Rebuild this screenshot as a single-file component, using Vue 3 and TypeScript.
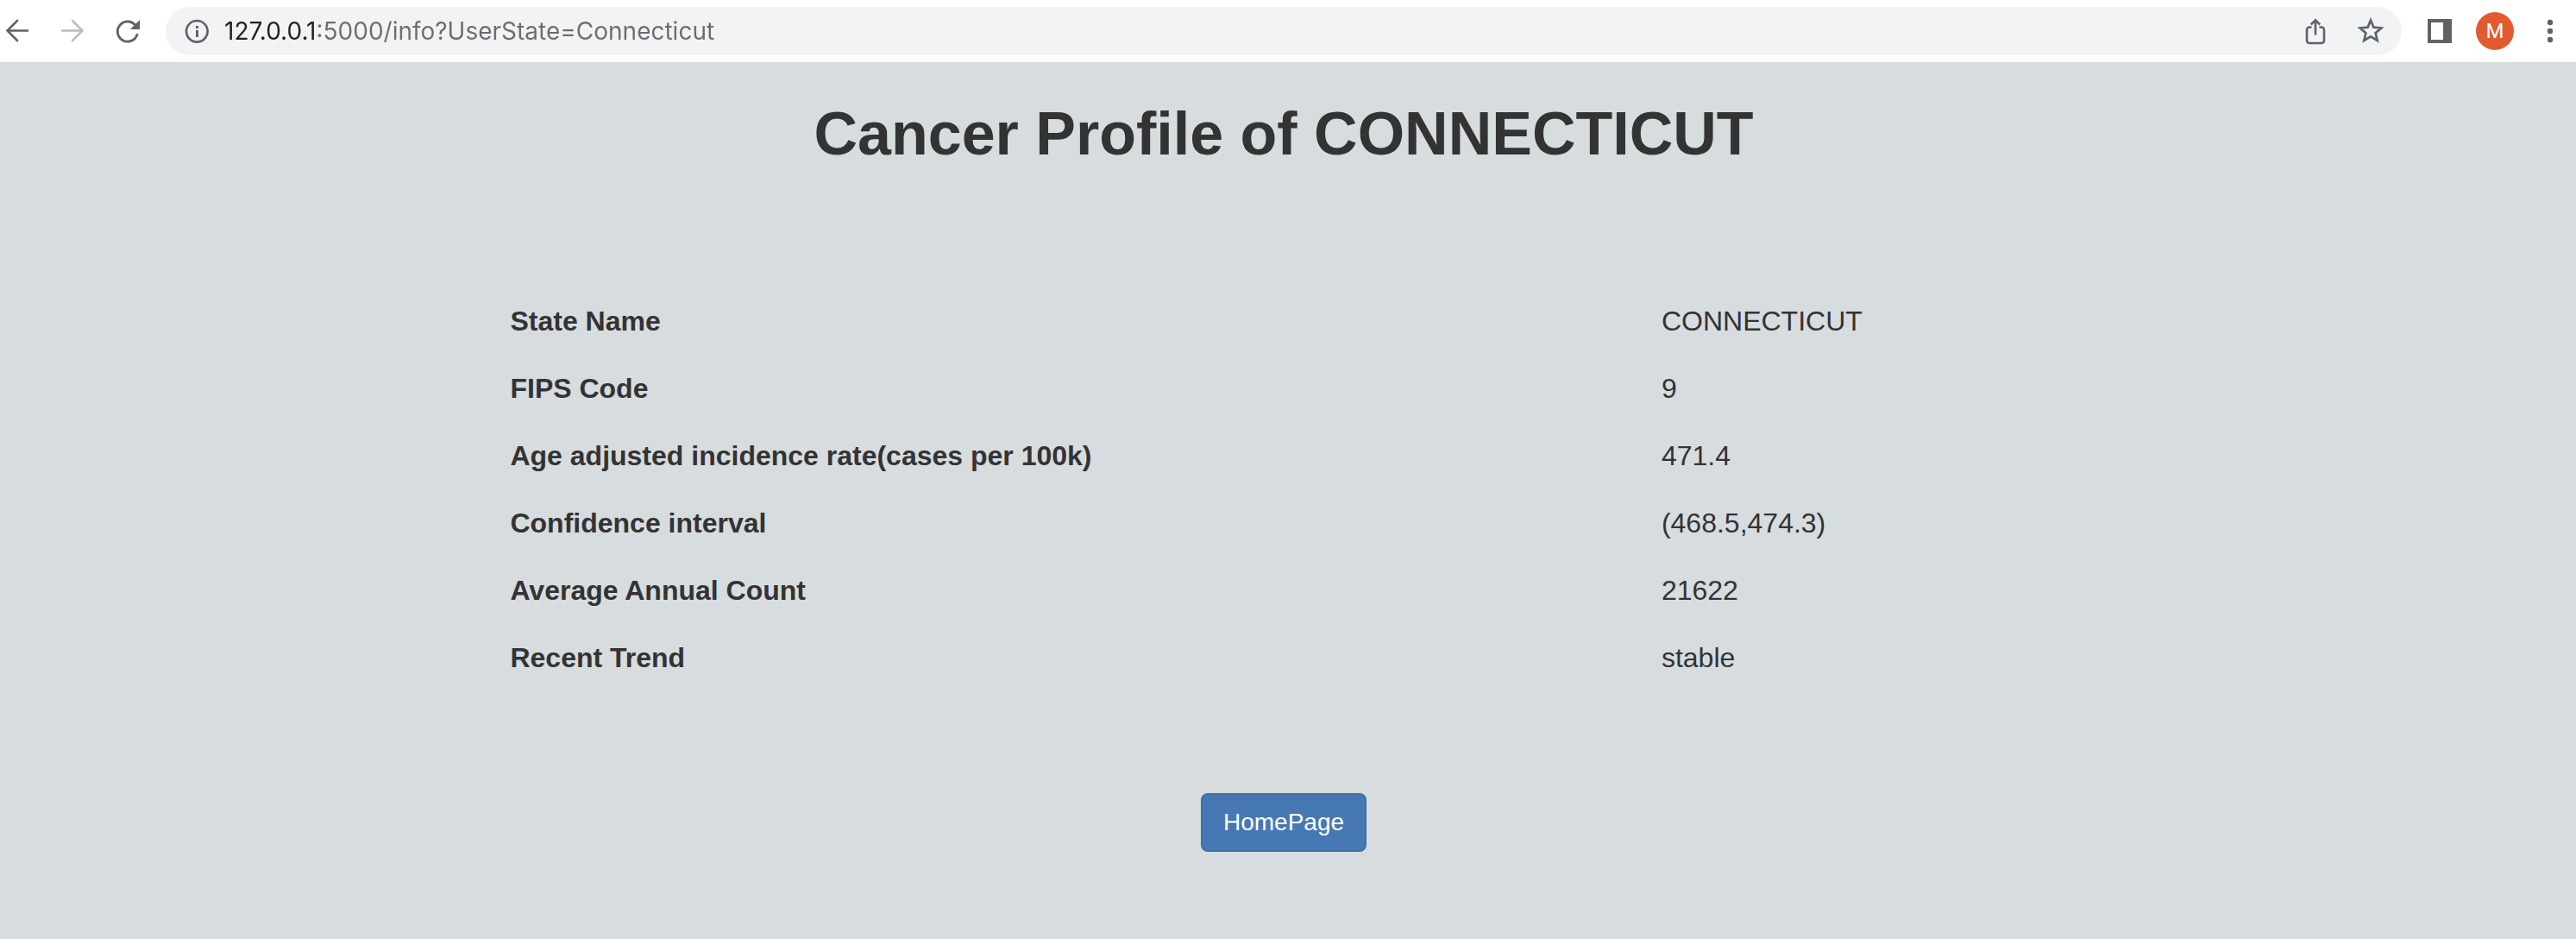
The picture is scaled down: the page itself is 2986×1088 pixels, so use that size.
<script setup lang="ts">
import { ref } from 'vue'

interface ProfileRow {
  label: string
  value: string
}

const address = ref('127.0.0.1:5000/info?UserState=Connecticut')

const rows: ProfileRow[] = [
  { label: 'State Name', value: 'CONNECTICUT' },
  { label: 'FIPS Code', value: '9' },
  { label: 'Age adjusted incidence rate(cases per 100k)', value: '471.4' },
  { label: 'Confidence interval', value: '(468.5,474.3)' },
  { label: 'Average Annual Count', value: '21622' },
  { label: 'Recent Trend', value: 'stable' },
]
</script>

<template>
  <div class="window">
    <header class="toolbar">
      <button class="tool" type="button" aria-label="Back">
        <svg width="28" height="28" viewBox="0 0 28 28" fill="none" stroke="#5f6368" stroke-width="2.6" stroke-linecap="round">
          <path d="M26 13.5H2.5M14 2L2.5 13.5L14 25" />
        </svg>
      </button>
      <button class="tool" type="button" aria-label="Forward">
        <svg width="28" height="28" viewBox="0 0 28 28" fill="none" stroke="#babcbe" stroke-width="2.6" stroke-linecap="round">
          <path d="M2 13.5H25.5M14 2L25.5 13.5L14 25" />
        </svg>
      </button>
      <button class="tool" type="button" aria-label="Reload">
        <svg width="28" height="28" viewBox="0 0 28 28">
          <path d="M23.6 8.2A11.6 11.6 0 1 0 24.9 18.2" fill="none" stroke="#5f6368" stroke-width="2.8" stroke-linecap="round" />
          <path d="M28 1V12H17Z" fill="#5f6368" />
        </svg>
      </button>
      <div class="omnibox">
        <button class="tool" type="button" aria-label="Site information">
          <svg width="28" height="28" viewBox="0 0 28 28">
            <circle cx="14.3" cy="14.3" r="12.3" fill="none" stroke="#5f6368" stroke-width="2.6" />
            <path d="M13 8h3v3h-3zM13 13h3v8h-3z" fill="#5f6368" />
          </svg>
        </button>
        <input v-model="address" class="address" type="text" aria-label="Address" spellcheck="false" />
        <div class="actions">
          <button class="tool" type="button" aria-label="Share">
            <svg width="28" height="32" viewBox="0 0 28 32" fill="none" stroke="#5f6368" stroke-width="2.6">
              <path d="M9.5 11.5H7a3 3 0 0 0-3 3V27a3 3 0 0 0 3 3H21a3 3 0 0 0 3-3V14.5a3 3 0 0 0-3-3H18.5" />
              <path d="M14 20.5V3.5M8.8 8.5L14 3.3L19.2 8.5" />
            </svg>
          </button>
          <button class="tool" type="button" aria-label="Bookmark">
            <svg width="32" height="32" viewBox="2 2 28 28" fill="none" stroke="#5f6368" stroke-width="2.4">
              <path d="M16 5L19 12.2L26.8 12.9L20.9 18L22.7 25.6L16 21.6L9.3 25.6L11.1 18L5.2 12.9L13 12.2Z" />
            </svg>
          </button>
        </div>
      </div>
      <button class="tool" type="button" aria-label="Side panel">
        <svg width="28" height="28" viewBox="0 0 28 28">
          <path d="M0 0H28V28H0ZM4 4V24H18V4Z" fill="#5f6368" fill-rule="evenodd" />
        </svg>
      </button>
      <button class="tool" type="button" aria-label="Profile M">
        <span class="avatar">M</span>
      </button>
      <button class="tool" type="button" aria-label="Menu">
        <svg width="8" height="28" viewBox="0 0 8 28" fill="#5f6368">
          <circle cx="4" cy="4" r="3.2" />
          <circle cx="4" cy="14" r="3.2" />
          <circle cx="4" cy="24" r="3.2" />
        </svg>
      </button>
    </header>

    <main class="page">
      <h1>Cancer Profile of CONNECTICUT</h1>
      <table class="profile">
        <tbody>
          <tr v-for="row in rows" :key="row.label">
            <th scope="row">{{ row.label }}</th>
            <td>{{ row.value }}</td>
          </tr>
        </tbody>
      </table>
      <button class="home" type="button">HomePage</button>
    </main>
  </div>
</template>

<style>
body {
  margin: 0;
  background: #d7dcdf;
}
</style>

<style scoped>
.window {
  min-height: 100vh;
  background: #d7dcdf;
  color: #333;
  font-family: "Liberation Sans", Arial, sans-serif;
}

.toolbar {
  display: flex;
  align-items: center;
  gap: 24px;
  height: 72px;
  padding-right: 10px;
  background: #fff;
}

.tool {
  display: flex;
  align-items: center;
  justify-content: center;
  flex: none;
  width: 40px;
  height: 40px;
  padding: 0;
  border: 0;
  background: none;
}

.tool svg {
  display: block;
  flex: none;
}

.omnibox {
  display: flex;
  align-items: center;
  flex: 1;
  min-width: 0;
  height: 56px;
  padding: 0 16px;
  box-sizing: border-box;
  border-radius: 28px;
  background: #f1f3f4;
}

/* The host is drawn darker than the rest of the address. */
.address {
  flex: 1;
  min-width: 0;
  height: 40px;
  margin-left: 12px;
  padding: 0;
  border: 0;
  outline: 0;
  background: linear-gradient(90deg, #202124 109px, #6b6d70 109px);
  -webkit-background-clip: text;
  background-clip: text;
  color: transparent;
  font: 28px Inter, Roboto, sans-serif;
}

.actions {
  display: flex;
  gap: 24px;
}

.avatar {
  flex: none;
  width: 44px;
  height: 44px;
  border-radius: 50%;
  background: #e25b30;
  color: #fff;
  font: 400 24px/44px Roboto, sans-serif;
  text-align: center;
}

.page {
  display: flex;
  flex-direction: column;
  align-items: center;
  padding: 43px 10px 40px 0;
}

h1 {
  margin: 0 0 138px;
  font-size: 70px;
  font-weight: 700;
  line-height: 80px;
}

.profile {
  width: 62%;
  margin-bottom: 118px;
  border-collapse: collapse;
  table-layout: fixed;
  font-size: 32px;
  line-height: 46px;
}

.profile th,
.profile td {
  padding: 16px 0 16px 26px;
  text-align: left;
}

.profile td {
  padding-left: 32px;
}

.profile th {
  width: 72%;
  box-sizing: border-box;
}

.home {
  padding: 12px 24px;
  border: 2px solid #3f6fa5;
  border-radius: 8px;
  background: #4679b4;
  color: #fff;
  font-family: inherit;
  font-size: 28px;
  line-height: 40px;
}
</style>
